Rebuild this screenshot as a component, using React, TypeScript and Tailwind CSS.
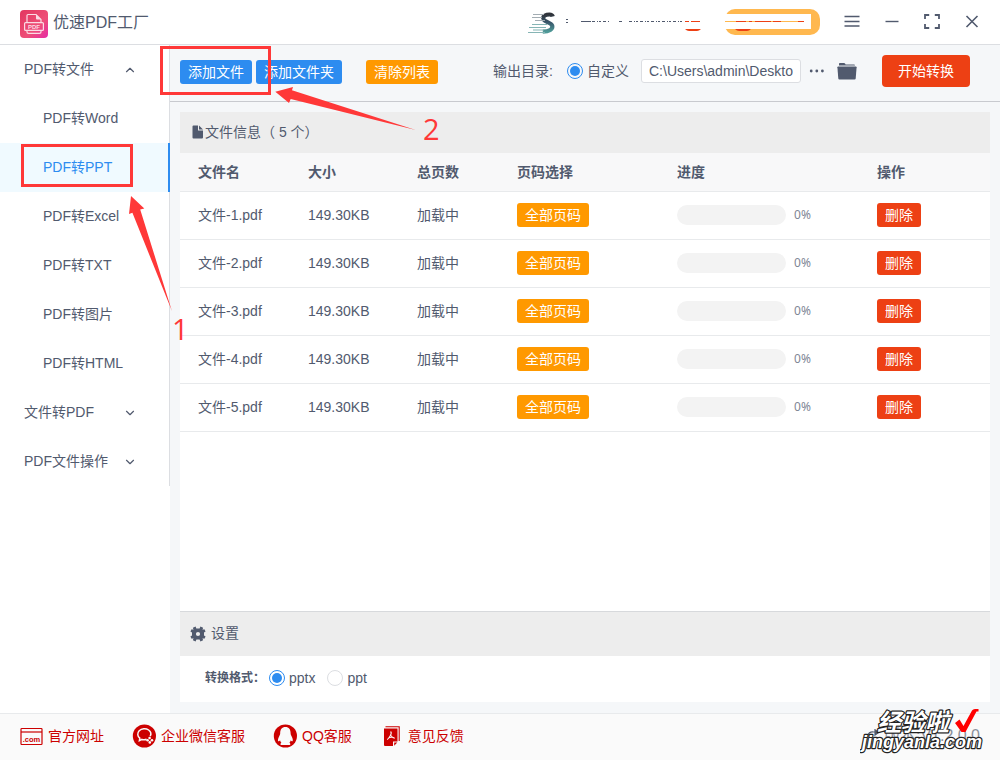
import { useState } from "react";
import { ChevronDown, ChevronUp } from "lucide-react";

const convertItems = ["PDF转Word", "PDF转PPT", "PDF转Excel", "PDF转TXT", "PDF转图片", "PDF转HTML"];

const initialFiles = [1, 2, 3, 4, 5].map((n) => ({
  name: `文件-${n}.pdf`,
  size: "149.30KB",
  pages: "加载中",
  progress: 0,
}));

function AppLogo() {
  return (
    <svg width="28" height="28" viewBox="0 0 28 28" aria-hidden="true">
      <defs>
        <linearGradient id="logo-bg" x1="0" y1="0" x2="1" y2="1">
          <stop offset="0" stopColor="#e2365f" />
          <stop offset="0.6" stopColor="#ee4f78" />
          <stop offset="1" stopColor="#e62ba6" />
        </linearGradient>
      </defs>
      <rect width="28" height="28" rx="4" fill="url(#logo-bg)" />
      <g fill="none" stroke="#fbdbe4" strokeWidth="1.2">
        <path d="M7 12V5.5Q7 4.5 8 4.5H16L21 9.5V12" />
        <rect x="4.6" y="12.6" width="18.8" height="7.8" rx="1" />
        <path d="M7 20.5V22Q7 23.4 8.5 23.4H19.5Q21 23.4 21 22V20.5" />
      </g>
      <path d="M16 4.5L21 9.5H17Q16 9.5 16 8.5Z" fill="#fbdbe4" />
      <text x="14" y="19" textAnchor="middle" fontSize="6" fontWeight="700" fill="#fbdbe4" fontFamily="Liberation Sans, sans-serif">
        PDF
      </text>
    </svg>
  );
}

function PromoStrip() {
  return (
    <svg width="296" height="34" viewBox="0 0 296 34" aria-hidden="true">
      <defs>
        <linearGradient id="promo-s" x1="0" y1="0" x2="0" y2="1">
          <stop offset="0" stopColor="#30343b" />
          <stop offset="0.45" stopColor="#39566a" />
          <stop offset="1" stopColor="#4f9a98" />
        </linearGradient>
      </defs>
      <path
        d="M27.8 11.5C27.3 9.8 24.8 9.2 21.8 9.8C18.3 10.6 17.2 12.8 18.8 14.8C20.6 17 26.2 17.6 27.2 20.6C28.2 24.2 24.2 26.6 17.8 26.6"
        fill="none"
        stroke="url(#promo-s)"
        strokeWidth="4.2"
      />
      <path d="M8 9.5H19M7 12.5H17M10 15.5H20" stroke="#a3adb3" strokeWidth="1" />
      <path d="M7 19.5H22M4 22.5H21M3 27.5H20M8 25H19" stroke="#86b5b5" strokeWidth="1.1" />
      <path d="M41 14.5h2M41 17.5h2" stroke="#515a6e" strokeWidth="1" />
      <path d="M56 16.5h10" stroke="#515a6e" strokeWidth="1" />
      <path d="M67 16.5h18M104 16.5h53" stroke="#515a6e" strokeWidth="1" strokeDasharray="3 2 1 1 2 2" />
      <path d="M94 16.5h3" stroke="#515a6e" strokeWidth="1" />
      <path d="M160 16.5h16" stroke="#ed4014" strokeWidth="1" strokeDasharray="4 2 9 1" />
      <path d="M160 24h16q-2 2-4 2h-8q-2 0-4-2z" fill="#ed4014" />
      <rect x="200" y="4" width="95" height="26" rx="10" fill="#ffb84f" />
      <rect x="198" y="9" width="88" height="15" fill="#fff" />
      <path d="M200 16.5h78" stroke="#ffb84f" strokeWidth="1" />
      <path d="M211 16.5h10M224 16.5h3M230 16.5h16M248 16.5h8M273 16.5h6" stroke="#ed4014" strokeWidth="1" />
      <path d="M210 24h16q-2 2-4 2h-8q-2 0-4-2z" fill="#ed4014" />
    </svg>
  );
}

function WindowButtons() {
  return (
    <div className="flex items-center gap-6 text-[#515a6e]">
      <button type="button" aria-label="菜单">
        <svg width="16" height="16" viewBox="0 0 16 16" className="block" fill="none" stroke="currentColor" strokeWidth="1.4" aria-hidden="true">
          <path d="M0.5 2.5h15M0.5 7.5h15M0.5 12h15" />
        </svg>
      </button>
      <button type="button" aria-label="最小化">
        <svg width="16" height="16" viewBox="0 0 16 16" className="block" fill="none" stroke="currentColor" strokeWidth="1.4" aria-hidden="true">
          <path d="M1.5 7.5h13" />
        </svg>
      </button>
      <button type="button" aria-label="最大化">
        <svg width="16" height="16" viewBox="0 0 16 16" className="block" fill="none" stroke="currentColor" strokeWidth="1.8" aria-hidden="true">
          <path d="M1 5V1H5.2M10.8 1H15V5M15 10V14H10.8M5.2 14H1V10" />
        </svg>
      </button>
      <button type="button" aria-label="关闭">
        <svg width="16" height="16" viewBox="0 0 16 16" className="block" fill="none" stroke="currentColor" strokeWidth="1.6" aria-hidden="true">
          <path d="M2.5 2l11 11M13.5 2l-11 11" />
        </svg>
      </button>
    </div>
  );
}

const radioClass =
  "h-4 w-4 appearance-none rounded-full border border-[#dcdee2] bg-white bg-clip-content p-[2px] checked:border-[#2d8cf0] checked:bg-[#2d8cf0]";

function Sidebar() {
  const [active, setActive] = useState("PDF转PPT");
  return (
    <aside className="w-[170px] shrink-0 bg-white">
      <nav className="border-r border-[#dcdee2]">
        <button type="button" className="flex h-[49px] w-full items-center pl-6 text-left">
          <span className="flex-1 pb-[2px]">PDF转文件</span>
          <ChevronUp size={14} strokeWidth={2} className="mr-8" />
        </button>
        {convertItems.map((item) => (
          <button
            key={item}
            type="button"
            onClick={() => setActive(item)}
            className={
              item === active
                ? "-mr-px flex h-[49px] w-[170px] items-center border-r-2 border-[#2d8cf0] bg-[#f0faff] pb-[2px] pl-[43px] text-[#2d8cf0]"
                : "flex h-[49px] w-full items-center pb-[2px] pl-[43px]"
            }
          >
            {item}
          </button>
        ))}
        {["文件转PDF", "PDF文件操作"].map((group) => (
          <button key={group} type="button" className="flex h-[49px] w-full items-center pl-6 text-left">
            <span className="flex-1 pb-[2px]">{group}</span>
            <ChevronDown size={14} strokeWidth={2} className="mr-8" />
          </button>
        ))}
      </nav>
    </aside>
  );
}

function Toolbar() {
  return (
    <div className="flex h-[57px] items-center border-b border-[#c8cacf] pr-[30px] pb-[3px] pl-[10px]">
      <button type="button" className="h-6 rounded-[3px] bg-[#2d8cf0] px-2 text-white">添加文件</button>
      <button type="button" className="ml-1 h-6 rounded-[3px] bg-[#2d8cf0] px-2 text-white">添加文件夹</button>
      <button type="button" className="ml-6 h-6 rounded-[3px] bg-[#ff9900] px-2 text-white">清除列表</button>
      <div className="ml-auto flex items-center pb-[2px]">
        <span>输出目录:</span>
        <label className="ml-[14px] flex items-center gap-1">
          <input type="radio" name="output" defaultChecked className={radioClass} />
          自定义
        </label>
        <input
          type="text"
          aria-label="输出目录"
          defaultValue="C:\Users\admin\Deskto"
          className="ml-3 h-6 w-40 rounded-[3px] border border-[#dcdee2] bg-white px-[7px]"
        />
        <button type="button" aria-label="更多" className="ml-2">
          <svg width="16" height="16" viewBox="0 0 16 16" className="block" fill="currentColor" aria-hidden="true">
            <circle cx="2.2" cy="8" r="1.4" />
            <circle cx="7.8" cy="8" r="1.4" />
            <circle cx="13.4" cy="8" r="1.4" />
          </svg>
        </button>
        <button type="button" aria-label="打开文件夹" className="ml-3">
          <svg width="20" height="18" viewBox="0 0 20 18" className="block" fill="currentColor" aria-hidden="true">
            <path d="M2 3.6V1.8Q2 1 2.8 1H7Q7.8 1 8.2 1.8L8.6 2.4H17Q18 2.4 18 3.6Z" />
            <path d="M0.4 5.2Q0.4 4.5 1.2 4.5H18.8Q19.6 4.5 19.6 5.2L18.7 16.6Q18.6 17.5 17.6 17.5H2.4Q1.4 17.5 1.3 16.6Z" />
          </svg>
        </button>
        <button type="button" className="ml-[25px] h-8 rounded bg-[#ed4014] px-4 text-white">开始转换</button>
      </div>
    </div>
  );
}

function FileTable() {
  const [files, setFiles] = useState(initialFiles);
  return (
    <section className="flex flex-1 flex-col bg-white">
      <h2 className="flex h-[41px] items-center bg-[#ededed] pb-[2px] pl-3">
        <svg width="12" height="14" viewBox="0 0 12 14" className="mr-px" fill="currentColor" aria-hidden="true">
          <path d="M1.5 0.5H6V5.5H11V12.5Q11 13.5 10 13.5H1.5Q0.5 13.5 0.5 12.5V1.5Q0.5 0.5 1.5 0.5ZM7 0.5L11 4.5H7Z" />
        </svg>
        文件信息（ {files.length} 个）
      </h2>
      <table className="w-full table-fixed text-left">
        <colgroup>
          <col className="w-[110px]" />
          <col className="w-[109px]" />
          <col className="w-[100px]" />
          <col className="w-[160px]" />
          <col className="w-[200px]" />
          <col />
        </colgroup>
        <thead>
          <tr className="h-[38px] border-b border-[#e8eaec] bg-[#f8f8f9]">
            {["文件名", "大小", "总页数", "页码选择", "进度", "操作"].map((title) => (
              <th key={title} scope="col" className="pl-[18px] font-bold">{title}</th>
            ))}
          </tr>
        </thead>
        <tbody>
          {files.map((file) => (
            <tr key={file.name} className="h-12 border-b border-[#e8eaec]">
              <td className="pl-[18px]">{file.name}</td>
              <td className="pl-[18px]">{file.size}</td>
              <td className="pl-[18px]">{file.pages}</td>
              <td className="pl-[18px]">
                <button type="button" className="block h-6 rounded-[3px] bg-[#ff9900] px-2 text-white">全部页码</button>
              </td>
              <td className="pl-[18px]">
                <div className="flex items-center gap-2">
                  <div className="h-5 w-[109px] overflow-hidden rounded-full bg-[#f3f3f3]">
                    <div className="h-full bg-[#2d8cf0]" style={{ width: `${file.progress}%` }} />
                  </div>
                  <span className="font-['Noto_Sans','Noto_Sans_CJK_SC',sans-serif] text-xs text-[#808695]">{file.progress}%</span>
                </div>
              </td>
              <td className="pl-[18px]">
                <button
                  type="button"
                  onClick={() => setFiles(files.filter((f) => f !== file))}
                  className="block h-6 rounded-[3px] bg-[#ed4014] px-2 text-white"
                >
                  删除
                </button>
              </td>
            </tr>
          ))}
        </tbody>
      </table>
    </section>
  );
}

function Settings() {
  return (
    <section className="bg-white">
      <h2 className="flex h-[45px] items-center gap-[5px] border-t border-[#d7d9dc] bg-[#ededed] pl-[10px]">
        <svg width="16" height="16" viewBox="0 0 16 16" fill="currentColor" aria-hidden="true">
          <path
            fillRule="evenodd"
            d="M6.3 2.6L5.6 0.6L2.9 1.7L3.5 3.7L1.6 3.2L0.4 5.4L2 6.5V9.5L0.4 10.6L1.6 12.8L3.5 12.3L2.9 14.3L5.6 15.4L6.4 13.6H9.6L10.4 15.4L13.1 14.3L12.5 12.3L14.4 12.8L15.6 10.6L14 9.5V6.5L15.6 5.4L14.4 3.2L12.5 3.7L13.1 1.7L10.4 0.6L9.6 2.6ZM8 5.9A2.1 2.1 0 1 0 8 10.1A2.1 2.1 0 1 0 8 5.9Z"
          />
        </svg>
        <span className="pb-[2px]">设置</span>
      </h2>
      <div className="flex h-[46px] items-center pb-[2px] pl-[25px]">
        <span className="text-xs font-bold">转换格式：</span>
        <label className="ml-1 flex items-center gap-1">
          <input type="radio" name="format" defaultChecked className={radioClass} />
          pptx
        </label>
        <label className="ml-3 flex items-center gap-1">
          <input type="radio" name="format" className={radioClass} />
          ppt
        </label>
      </div>
    </section>
  );
}

function Footer() {
  return (
    <footer className="flex h-[47px] items-center border-t border-[#e8eaec] bg-[#fafafa] pr-5 pb-[2px] pl-5 text-[#cc0000]">
      <a href="#site" className="flex items-center gap-[5px]">
        <svg width="23" height="24" viewBox="0 0 23 24" fill="none" stroke="currentColor" aria-hidden="true">
          <rect x="1" y="4.5" width="21" height="16" rx="0.8" strokeWidth="1.2" />
          <path d="M1 8h21" strokeWidth="1.2" />
          <text x="11.5" y="18" textAnchor="middle" fontSize="7.5" fontWeight="700" fill="currentColor" stroke="none" fontFamily="Liberation Sans Narrow, Liberation Sans, sans-serif">
            .com
          </text>
        </svg>
        官方网址
      </a>
      <a href="#wecom" className="ml-[28px] flex items-center gap-[5px]">
        <svg width="24" height="24" viewBox="0 0 24 24" aria-hidden="true">
          <circle cx="12.4" cy="12" r="11.6" fill="currentColor" />
          <path
            d="M18.2 12.2C19.4 10 18.8 7.6 16.6 6C13.8 4 9.6 4.4 7.2 6.8C5 9.2 5.4 12.4 7.8 14.2L7.4 16.6L10 15.4C11.6 15.8 13.2 15.8 14.6 15.2"
            fill="none"
            stroke="#fafafa"
            strokeWidth="1.5"
          />
          <g fill="#fafafa">
            <circle cx="17.6" cy="14" r="1.3" />
            <circle cx="20" cy="16.2" r="1.3" />
            <circle cx="15.6" cy="16.2" r="1.3" />
            <circle cx="17.8" cy="18.4" r="1.3" />
          </g>
        </svg>
        企业微信客服
      </a>
      <a href="#qq" className="ml-[28px] flex items-center gap-[5px]">
        <svg width="24" height="24" viewBox="0 0 24 24" aria-hidden="true">
          <circle cx="12.4" cy="12" r="11.6" fill="currentColor" />
          <path
            fill="#fafafa"
            d="M12.4 3C8.8 3 7.2 5.6 7.2 9C7.2 10.4 6.8 11 6.1 12.4C5 14.4 4.6 16.6 5.3 17.3C5.9 17.6 6.6 16.8 7 16.2C7.3 17.3 7.8 18 8.4 18.7C7.4 19.2 6.9 20.8 8.2 21H16.6C17.9 20.8 17.4 19.2 16.4 18.7C17 18 17.5 17.3 17.8 16.2C18.2 16.8 18.9 17.6 19.5 17.3C20.2 16.6 19.8 14.4 18.7 12.4C18 11 17.6 10.4 17.6 9C17.6 5.6 16 3 12.4 3Z"
          />
        </svg>
        QQ客服
      </a>
      <a href="#feedback" className="ml-[28px] flex items-center gap-1">
        <svg width="24" height="24" viewBox="0 0 24 24" aria-hidden="true">
          <path d="M5.5 2.8H19.2V17" fill="none" stroke="currentColor" strokeWidth="1.1" />
          <path d="M4 4.5H17.5V17.5H13V22H5Q4 22 4 21ZM14.2 18.6H17.3L14.2 21.8Z" fill="currentColor" />
          <path
            d="M10.6 7.5Q12 8.8 10.4 11.6Q9 14.4 7.2 15.6M10.6 11.2Q12 13.6 14.8 14.2M8.8 13.6Q11.4 12.8 13.6 13.6"
            fill="none"
            stroke="#fafafa"
            strokeWidth="1.1"
          />
        </svg>
        意见反馈
      </a>
      <span className="ml-auto flex items-center gap-1 text-base text-[#8b909c]">
        <svg width="14" height="14" viewBox="0 0 14 14" fill="none" stroke="#515a6e" strokeWidth="1.2" aria-hidden="true">
          <path d="M1.5 7Q3 2.5 7.5 3H10" />
          <path d="M9 0.8L12.5 3.4L9 6Z" fill="#515a6e" />
        </svg>
        版本:V1.2.0.0
      </span>
    </footer>
  );
}

function Annotations() {
  return (
    <div className="pointer-events-none absolute inset-0 overflow-hidden text-[#ff3838]">
      <div className="absolute top-[144px] left-[21px] h-[43px] w-[112px] border-3 border-[#ff3838]" />
      <div className="absolute top-[46px] left-[160px] h-[49px] w-[111px] border-3 border-[#ff3838]" />
      <svg width="420" height="320" viewBox="0 0 420 320" className="absolute top-0 left-0" fill="currentColor" aria-hidden="true">
        <path d="M275.3 91.7L293 87L292 90.2L415.7 130L290.7 99L289 103Z" />
        <path d="M131 196L144.3 208.5L140.2 209.5L172 311.3L132.4 212.7L129 213.9Z" />
      </svg>
      <span className="absolute top-[313px] left-[172px] font-['Open_Sans',sans-serif] text-[29px] leading-8">1</span>
      <span className="absolute top-[113px] left-[423px] font-['Open_Sans',sans-serif] text-[29px] leading-8">2</span>
    </div>
  );
}

function Watermark() {
  return (
    <svg width="140" height="56" viewBox="0 0 140 56" className="pointer-events-none absolute right-0 bottom-0" aria-label="经验啦 jingyanla.com">
      <g
        fill="#fff"
        stroke="#222"
        strokeWidth="2.4"
        strokeLinejoin="round"
        paintOrder="stroke"
        fontStyle="italic"
        fontWeight="700"
        fontFamily="Liberation Sans, Noto Sans CJK SC, sans-serif"
      >
        <text x="17" y="27" fontSize="24">经验啦</text>
        <text x="2" y="44" fontSize="18">jingyanla.com</text>
      </g>
      <path d="M95 19L99.5 15.5L103.5 22L112 6.5Q113 5 115 5H118.5V7.5H116.5L105.5 28H101.5Z" fill="#ff0000" />
    </svg>
  );
}

export default function App() {
  return (
    <div className="relative flex min-h-screen flex-col bg-[#f5f7f9] font-['Liberation_Sans','Noto_Sans_CJK_SC',sans-serif] text-sm text-[#515a6e]">
      <header className="flex h-[45px] items-center border-b border-[#dcdee2] bg-white pr-5 pl-5">
        <div className="flex items-center gap-[5px] pt-1">
          <AppLogo />
          <h1 className="pb-[2px] text-base">优速PDF工厂</h1>
        </div>
        <div className="ml-auto flex items-center">
          <div className="mr-[23px]">
            <PromoStrip />
          </div>
          <WindowButtons />
        </div>
      </header>
      <div className="flex flex-1">
        <Sidebar />
        <main className="flex min-w-0 flex-1 flex-col">
          <Toolbar />
          <div className="flex flex-1 flex-col px-[10px] pt-[10px] pb-[11px]">
            <FileTable />
            <Settings />
          </div>
        </main>
      </div>
      <Footer />
      <Annotations />
      <Watermark />
    </div>
  );
}
